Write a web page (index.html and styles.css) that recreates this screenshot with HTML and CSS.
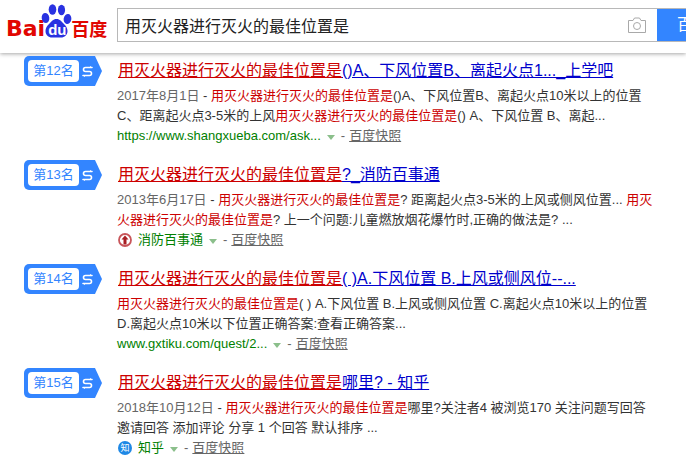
FILE: index.html
```html
<!DOCTYPE html>
<html lang="zh-CN">
<head>
<meta charset="utf-8">
<title>用灭火器进行灭火的最佳位置是</title>
<link rel="stylesheet" href="styles.css">
</head>
<body>
<header class="top">
  <div class="logo">
    <span class="logo-bai">Bai</span>
    <span class="paw">
      <svg width="31" height="34" viewBox="0 0 31 34"><g fill="#2932e1"><ellipse cx="4.500" cy="14" rx="3.800" ry="5" transform="rotate(-8 4.500 14)"/><ellipse cx="11.500" cy="5.500" rx="3.800" ry="5.200"/><ellipse cx="20.500" cy="6" rx="3.600" ry="5.200"/><ellipse cx="26.500" cy="15" rx="3.800" ry="5" transform="rotate(10 26.500 15)"/><path d="M15.500 15c-3.500 0-5 2.500-7 4.500C6 22 4.500 24 4.500 27c0 4 3 6.500 6.500 6.500h9c3.500 0 6.500-2.500 6.500-6.500 0-3-1.500-5-4-7.500-2-2-3.500-4.500-7-4.500z"/></g></svg>
      <span class="paw-du">du</span>
    </span>
    <span class="logo-cn">百度</span>
  </div>
  <div class="search">
    <span class="query">用灭火器进行灭火的最佳位置是</span>
    <svg class="cam" width="18" height="16" viewBox="0 0 18 16"><path d="M.5 3.500h4.500l1.500-2.500h5l1.500 2.500h4.500v12h-17z" fill="none" stroke="#a9a9a9"/><circle cx="9" cy="9" r="3.500" fill="none" stroke="#a9a9a9"/></svg>
    <span class="btn">百度一下</span>
  </div>
</header>
<main class="list">
  <article class="item">
    <div class="rank"><span class="rank-label">第12名</span><svg class="rank-icon" width="11" height="11" viewBox="0 0 11 11"><path d="M10 1.500H3.500a2 2 0 0 0 0 4h4a2 2 0 0 1 0 4H1" fill="none" stroke="#fff" stroke-width="1.600" stroke-linecap="round"/><path d="M8 .5l2 1.300M3 10.500l-2-1.300" fill="none" stroke="#fff"/></svg></div>
    <div class="body">
      <h3 class="title"><a href="#"><em>用灭火器进行灭火的最佳位置是</em>()A、下风位置B、离起火点1..._上学吧</a></h3>
      <p class="text"><span class="date">2017年8月1日</span> - <em>用灭火器进行灭火的最佳位置是</em>()A、下风位置B、离起火点10米以上的位置C、距离起火点3-5米的上风<em>用灭火器进行灭火的最佳位置是</em>() A、下风位置 B、离起...</p>
      <div class="meta"><span class="url">https://www.shangxueba.com/ask...</span><span class="caret"></span><span class="dash">-</span><a class="cache" href="#">百度快照</a></div>
    </div>
  </article>
  <article class="item">
    <div class="rank"><span class="rank-label">第13名</span><svg class="rank-icon" width="11" height="11" viewBox="0 0 11 11"><path d="M10 1.500H3.500a2 2 0 0 0 0 4h4a2 2 0 0 1 0 4H1" fill="none" stroke="#fff" stroke-width="1.600" stroke-linecap="round"/><path d="M8 .5l2 1.300M3 10.500l-2-1.300" fill="none" stroke="#fff"/></svg></div>
    <div class="body">
      <h3 class="title"><a href="#"><em>用灭火器进行灭火的最佳位置是</em>?_消防百事通</a></h3>
      <p class="text"><span class="date">2013年6月17日</span> - <em>用灭火器进行灭火的最佳位置是</em>? 距离起火点3-5米的上风或侧风位置... <em>用灭火器进行灭火的最佳位置是</em>? 上一个问题:儿童燃放烟花爆竹时,正确的做法是? ...</p>
      <div class="meta"><svg class="site-icon" width="14" height="14" viewBox="0 0 14 14"><circle cx="7" cy="7" r="6" fill="#fff" stroke="#c8555a" stroke-width="1.800"/><path d="M7 2.500l3.500 4H8.500v5h-3v-5H3.500z" fill="#a81e23"/></svg><span class="url">消防百事通</span><span class="caret"></span><span class="dash">-</span><a class="cache" href="#">百度快照</a></div>
    </div>
  </article>
  <article class="item">
    <div class="rank"><span class="rank-label">第14名</span><svg class="rank-icon" width="11" height="11" viewBox="0 0 11 11"><path d="M10 1.500H3.500a2 2 0 0 0 0 4h4a2 2 0 0 1 0 4H1" fill="none" stroke="#fff" stroke-width="1.600" stroke-linecap="round"/><path d="M8 .5l2 1.300M3 10.500l-2-1.300" fill="none" stroke="#fff"/></svg></div>
    <div class="body">
      <h3 class="title"><a href="#"><em>用灭火器进行灭火的最佳位置是</em>( )A.下风位置 B.上风或侧风位--...</a></h3>
      <p class="text"><em>用灭火器进行灭火的最佳位置是</em>( ) A.下风位置 B.上风或侧风位置 C.离起火点10米以上的位置 D.离起火点10米以下位置正确答案:查看正确答案...</p>
      <div class="meta"><span class="url">www.gxtiku.com/quest/2...</span><span class="caret"></span><span class="dash">-</span><a class="cache" href="#">百度快照</a></div>
    </div>
  </article>
  <article class="item">
    <div class="rank"><span class="rank-label">第15名</span><svg class="rank-icon" width="11" height="11" viewBox="0 0 11 11"><path d="M10 1.500H3.500a2 2 0 0 0 0 4h4a2 2 0 0 1 0 4H1" fill="none" stroke="#fff" stroke-width="1.600" stroke-linecap="round"/><path d="M8 .5l2 1.300M3 10.500l-2-1.300" fill="none" stroke="#fff"/></svg></div>
    <div class="body">
      <h3 class="title"><a href="#"><em>用灭火器进行灭火的最佳位置是</em>哪里? - 知乎</a></h3>
      <p class="text"><span class="date">2018年10月12日</span> - <em>用灭火器进行灭火的最佳位置是</em>哪里?关注者4 被浏览170 关注问题写回答 邀请回答 添加评论 分享 1 个回答 默认排序 ...</p>
      <div class="meta"><span class="zhi">知</span><span class="url">知乎</span><span class="caret"></span><span class="dash">-</span><a class="cache" href="#">百度快照</a></div>
    </div>
  </article>
</main>
</body>
</html>
```
FILE: styles.css
```css
* { box-sizing: border-box; }
html, body { margin: 0; padding: 0; }
body {
  width: 686px;
  height: 472px;
  overflow: hidden;
  background: #fff;
  color: #333;
  font-family: "Liberation Sans", "Noto Sans CJK SC", sans-serif;
}
.top {
  display: flex;
  align-items: flex-start;
  height: 53px;
  box-shadow: 0 1px 4px rgba(0, 0, 0, .35);
}
.logo {
  display: flex;
  align-items: flex-start;
  width: 117px;
  padding: 4px 0 0 6px;
  color: #e10601;
}
.logo-bai {
  margin-top: 14px;
  font-family: "DejaVu Sans", sans-serif;
  font-size: 22px;
  line-height: 22px;
  font-weight: 700;
}
.paw {
  position: relative;
  display: block;
  flex: none;
  width: 31px;
  height: 34px;
  margin-left: -4px;
}
.paw-du {
  position: absolute;
  left: 7px;
  top: 18px;
  color: #fff;
  font-size: 15px;
  line-height: 15px;
  font-weight: 700;
}
.logo-cn {
  margin-top: 15px;
  margin-left: -1px;
  font-size: 18px;
  line-height: 22px;
  font-weight: 700;
  white-space: nowrap;
}
.search {
  display: flex;
  align-items: center;
  flex: 1;
  height: 34px;
  margin-top: 8px;
  border: 1px solid #b8b8b8;
  border-right: 0;
  padding-left: 7px;
  overflow: hidden;
}
.query { flex: 1; font-size: 16px; color: #222; white-space: nowrap; }
.cam { flex: none; margin-right: 11px; }
.btn {
  flex: none;
  width: 29px;
  height: 34px;
  margin: -1px 0;
  padding-left: 20px;
  background: #3385ff;
  color: #fff;
  font-size: 16px;
  line-height: 34px;
  white-space: nowrap;
  overflow: hidden;
}
.list { padding: 3px 0 0 24px; }
.item { display: flex; height: 104px; }
.rank {
  display: flex;
  align-items: center;
  flex: none;
  width: 78px;
  height: 30px;
  padding-left: 4px;
  background: #3385ff;
  border-radius: 5px 0 0 5px;
  clip-path: polygon(0 0, 91% 0, 100% 50%, 91% 100%, 0 100%);
}
.rank-label {
  width: 51px;
  height: 22px;
  border-radius: 4px;
  background: #fff;
  color: #3385ff;
  font-size: 13px;
  line-height: 22px;
  text-align: center;
}
.rank-icon { margin-left: 3px; }
.body { width: 584px; padding-left: 15px; }
.title { margin: 4px 0 0 1px; font-size: 16px; line-height: 22px; font-weight: 400; white-space: nowrap; }
.title a { color: #00c; text-decoration: underline; }
em { color: #c00; font-style: normal; }
.title em { text-decoration: underline; }
.text { width: 537px; margin: 4px 0 0; font-size: 13px; line-height: 20px; }
.date { color: #666; }
.meta { display: flex; align-items: center; height: 20px; font-size: 13px; line-height: 20px; color: #666; }
.url { color: #008000; white-space: nowrap; }
.caret {
  width: 0;
  height: 0;
  margin: 3px 6px 0 6px;
  border: 4px solid transparent;
  border-top: 5px solid #8bbf8b;
  border-bottom: 0;
}
.dash { margin-right: 4px; }
.cache { color: #666; text-decoration: underline; }
.site-icon { margin: 0 6px 0 1px; flex: none; }
.zhi {
  flex: none;
  width: 14px;
  height: 14px;
  margin: 0 6px 0 1px;
  border-radius: 50%;
  background: #1e88e5;
  color: #fff;
  font-size: 9px;
  line-height: 14px;
  text-align: center;
}
```
